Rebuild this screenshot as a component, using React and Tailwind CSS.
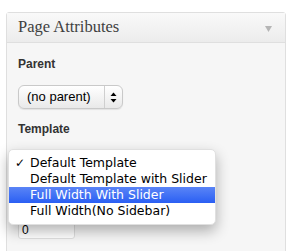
import React from "react"

const templates = [
  { label: "Default Template", checked: true },
  { label: "Default Template with Slider" },
  { label: "Full Width With Slider", active: true },
  { label: "Full Width(No Sidebar)" },
]

function SelectArrows() {
  return (
    <svg width="7" height="11" viewBox="0 0 7 11" className="text-black">
      <path d="M3.5 0.5 L6.5 4 L0.5 4 Z" fill="currentColor" />
      <path d="M3.5 10.5 L6.5 7 L0.5 7 Z" fill="currentColor" />
    </svg>
  )
}

export default function App() {
  return (
    <div className="w-[294px] h-[251px] bg-white pl-[6px] pt-[12px] overflow-hidden relative">
      <div className="w-[280px] h-[260px] border border-[#dfdfdf] rounded-t-[3px] bg-[#f6f6f6]">
        {/* Header */}
        <div className="h-[30px] flex items-center justify-between px-[11px] border-b border-[#dfdfdf] bg-gradient-to-b from-[#f9f9f9] to-[#ececec]">
          <span className="text-[16.5px] text-[#3f3f3f] font-['Liberation_Serif',serif]">Page Attributes</span>
          <svg width="7" height="6" viewBox="0 0 7 6" className="mr-[2px] mt-[2px]">
            <path d="M0 0 L7 0 L3.5 6 Z" fill="#b5b5b5" />
          </svg>
        </div>

        {/* Body */}
        <div className="px-[11px] font-['Liberation_Sans',Arial,sans-serif] text-[#333]">
          <p className="text-[12px] font-bold mt-[14px] leading-[14px]">Parent</p>
          <div className="mt-[14px] w-[105px] h-[24px] rounded-[6px] border border-[#c9c9c9] bg-gradient-to-b from-white to-[#e9e9e9] flex items-center shadow-[0_1px_1px_rgba(0,0,0,0.08)]">
            <span className="flex-1 pl-[8px] text-[13px] text-black">(no parent)</span>
            <div className="w-[18px] h-full border-l border-[#cfcfcf] flex items-center justify-center">
              <SelectArrows />
            </div>
          </div>
          <p className="text-[12px] font-bold mt-[13px] leading-[14px]">Template</p>
          <div className="mt-[14px] w-[189px] h-[24px] rounded-[6px] border border-[#d6d6d6] bg-gradient-to-b from-white to-[#ececec] flex items-center justify-end pr-[6px] opacity-40">
            <SelectArrows />
          </div>
          <div className="h-[47px]" />
          <div className="w-[57px] h-[18px] rounded-[3px] border border-[#dfdfdf] bg-white flex items-center pl-[3px] text-[12px] text-black">
            0
          </div>
        </div>
      </div>

      {/* Open template menu */}
      <div className="absolute left-[8px] top-[149px] w-[208px] rounded-[5px] bg-white border border-[#e0e0e0] py-[5px] shadow-[0_6px_14px_rgba(0,0,0,0.3)] font-['DejaVu_Sans',sans-serif] text-[12.5px]">
        {templates.map((t) => (
          <div
            key={t.label}
            className={`h-[16px] flex items-center ${
              t.active ? "bg-gradient-to-b from-[#5a84f6] to-[#2a5ef3] text-white" : "text-black"
            }`}
          >
            <span className="w-[21px] pl-[6px] text-[12px] leading-none">{t.checked ? "✓" : ""}</span>
            <span className="leading-none">{t.label}</span>
          </div>
        ))}
      </div>
    </div>
  )
}
